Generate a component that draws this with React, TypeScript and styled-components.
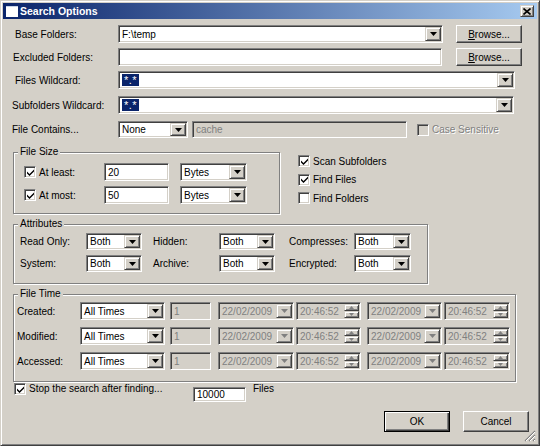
import React from 'react'
import styled, { createGlobalStyle, css } from 'styled-components'

const face = '#d4d0c8'
const shadow = '#808080'
const dark = '#404040'

const GlobalStyle = createGlobalStyle`
  html, body { margin: 0; padding: 0; background: ${face}; }
  body {
    font-family: "Liberation Sans", Arial, sans-serif;
    font-size: 10px;
    color: #000;
  }
  * { box-sizing: border-box; }
`

// classic 3D edges
const sunken = css`
  border: 1px solid;
  border-color: ${shadow} #fff #fff ${shadow};
  box-shadow: inset 1px 1px 0 ${dark}, inset -1px -1px 0 ${face};
`

const raised = css`
  border: 1px solid;
  border-color: ${face} ${dark} ${dark} ${face};
  box-shadow: inset 1px 1px 0 #fff, inset -1px -1px 0 ${shadow};
  background: ${face};
`

const Window = styled.div`
  position: relative;
  width: 540px;
  height: 446px;
  background: ${face};
  border: 1px solid;
  border-color: ${face} ${dark} ${dark} ${face};
  box-shadow: inset 1px 1px 0 #fff, inset -1px -1px 0 ${shadow};
  padding: 2px;
  display: flex;
  flex-direction: column;
`

const TitleBar = styled.div`
  height: 16px;
  display: flex;
  align-items: center;
  padding: 0 3px 0 3px;
  background: linear-gradient(to right, #0a246a, #a6caf0);
  color: #fff;
  font-weight: bold;
  font-size: 10.5px;
`

const TitleText = styled.span`
  flex: 1;
  margin-left: 2px;
`

const CloseButton = styled.span`
  ${raised};
  width: 14px;
  height: 12px;
  display: flex;
  align-items: center;
  justify-content: center;
`

const Row = styled.div<{ $mt: number; $pl?: number }>`
  display: flex;
  align-items: center;
  margin-top: ${p => p.$mt}px;
  padding-left: ${p => p.$pl ?? 9}px;
`

const Label = styled.span<{ $w: number; $indent?: number; $off?: boolean }>`
  width: ${p => p.$w}px;
  padding-left: ${p => p.$indent ?? 0}px;
  flex-shrink: 0;
  white-space: nowrap;
  color: ${p => (p.$off ? shadow : '#000')};
  text-shadow: ${p => (p.$off ? '1px 1px 0 #fff' : 'none')};
`

type FieldProps = { $w: number; $h?: number; $off?: boolean; $ml?: number; $mt?: number }

const Field = styled.div<FieldProps>`
  ${sunken};
  width: ${p => p.$w}px;
  height: ${p => p.$h ?? 18}px;
  margin-left: ${p => p.$ml ?? 0}px;
  margin-top: ${p => p.$mt ?? 0}px;
  padding: 1px;
  display: flex;
  align-items: stretch;
  flex-shrink: 0;
  background: ${p => (p.$off ? face : '#fff')};
  color: ${p => (p.$off ? shadow : '#000')};
`

const FieldText = styled.span`
  flex: 1;
  display: flex;
  align-items: center;
  padding-left: 2px;
  overflow: hidden;
  white-space: nowrap;
`

const Selected = styled.span`
  background: #0a246a;
  color: #fff;
  padding: 0 2px;
  font-size: 11px;
  line-height: 12px;
  letter-spacing: 0.5px;
`

const DropButton = styled.span`
  ${raised};
  width: 16px;
  display: flex;
  align-items: center;
  justify-content: center;
`

const Spin = styled.span`
  width: 15px;
  display: flex;
  flex-direction: column;
`

const SpinPart = styled.span`
  ${raised};
  flex: 1;
  display: flex;
  align-items: center;
  justify-content: center;
`

const Button = styled.button<{ $default?: boolean; $ml?: number; $h?: number }>`
  width: 66px;
  height: ${p => p.$h ?? 21}px;
  margin: 0 0 0 ${p => p.$ml ?? 0}px;
  padding: 0;
  font: inherit;
  color: #000;
  background: ${face};
  flex-shrink: 0;
  ${p =>
    p.$default
      ? css`
          border: 1px solid #000;
          box-shadow: inset 1px 1px 0 #fff, inset -1px -1px 0 ${dark}, inset -2px -2px 0 ${shadow};
        `
      : css`
          border: 1px solid;
          border-color: #fff ${dark} ${dark} #fff;
          box-shadow: inset -1px -1px 0 ${shadow};
        `}
`

const Box = styled.span<{ $off?: boolean }>`
  ${sunken};
  width: 12px;
  height: 12px;
  flex-shrink: 0;
  display: flex;
  align-items: center;
  justify-content: center;
  background: ${p => (p.$off ? face : '#fff')};
`

const CheckText = styled.span<{ $off?: boolean; $w?: number; $ml?: number }>`
  margin-left: ${p => p.$ml ?? 3}px;
  white-space: nowrap;
  ${p => (p.$w ? `width: ${p.$w}px;` : '')}
  color: ${p => (p.$off ? shadow : '#000')};
  text-shadow: ${p => (p.$off ? '1px 1px 0 #fff' : 'none')};
`

const Group = styled.div<{ $w: number; $h: number; $mt?: number }>`
  width: ${p => p.$w}px;
  height: ${p => p.$h}px;
  margin-top: ${p => p.$mt ?? 0}px;
  flex-shrink: 0;
  border: 1px solid ${shadow};
  box-shadow: inset 1px 1px 0 #fff, 1px 1px 0 #fff;
  display: flex;
  flex-direction: column;
`

const Caption = styled.span`
  align-self: flex-start;
  margin: -7px 0 0 4px;
  padding: 0 2px;
  line-height: 12px;
  background: ${face};
`

const GroupBody = styled.div<{ $mt: number; $pl: number; $gap: number }>`
  display: flex;
  flex-direction: column;
  gap: ${p => p.$gap}px;
  margin-top: ${p => p.$mt}px;
  padding-left: ${p => p.$pl}px;
`

const Line = styled.div`
  display: flex;
  align-items: center;
`

const MidRow = styled.div`
  display: flex;
  align-items: flex-start;
  margin-top: 14px;
  padding-left: 10px;
`

const CheckList = styled.div`
  display: flex;
  flex-direction: column;
  margin-left: 18px;
`

const CheckItem = styled.div`
  height: 18.5px;
  display: flex;
  align-items: center;
`

const Block = styled.div`
  padding-left: 10px;
`

const AttrGrid = styled.div`
  display: grid;
  grid-template-columns: 66px 67px 66px 70px 65px 57px;
  row-gap: 5px;
  align-items: center;
  margin-top: 3px;
  padding-left: 6px;
`

const StopRow = styled.div`
  display: flex;
  align-items: flex-start;
  margin-top: 1px;
  padding-left: 11px;
`

const ButtonRow = styled.div`
  display: flex;
  justify-content: flex-end;
  margin-top: 9px;
  padding-right: 8px;
`

const Grip = styled.svg`
  position: absolute;
  right: 3px;
  bottom: 3px;
`

const Arrow = ({ color = '#000' }: { color?: string }) => (
  <svg width="7" height="4" viewBox="0 0 7 4">
    <path d="M0 0h7L3.5 4z" fill={color} />
  </svg>
)

const SmallArrow = ({ up, color }: { up?: boolean; color: string }) => (
  <svg width="5" height="3" viewBox="0 0 5 3">
    <path d={up ? 'M2.5 0L5 3H0z' : 'M0 0h5L2.5 3z'} fill={color} />
  </svg>
)

const Tick = ({ color = '#000' }: { color?: string }) => (
  <svg width="7" height="7" viewBox="0 0 7 7">
    <path d="M0 2.5L2.5 5L7 0.5V2.5L2.5 7L0 4.5z" fill={color} />
  </svg>
)

type ComboProps = { w: number; h?: number; ml?: number; off?: boolean; children?: React.ReactNode }

const Combo = ({ w, h, ml, off, children }: ComboProps) => (
  <Field $w={w} $h={h} $ml={ml} $off={off}>
    <FieldText>{children}</FieldText>
    <DropButton>
      <Arrow color={off ? shadow : '#000'} />
    </DropButton>
  </Field>
)

const TimeBox = ({ w, ml }: { w: number; ml: number }) => (
  <Field $w={w} $ml={ml} $off>
    <FieldText>20:46:52</FieldText>
    <Spin>
      <SpinPart>
        <SmallArrow up color={shadow} />
      </SpinPart>
      <SpinPart>
        <SmallArrow color={shadow} />
      </SpinPart>
    </Spin>
  </Field>
)

const Check = ({ checked, off }: { checked?: boolean; off?: boolean }) => (
  <Box $off={off}>{checked && <Tick />}</Box>
)

const Browse = ({ ml }: { ml: number }) => (
  <Button $ml={ml} $h={18}>
    <u>B</u>rowse...
  </Button>
)

const timeRows = ['Created:', 'Modified:', 'Accessed:']
const attrRows = [
  ['Read Only:', 'Hidden:', 'Compresses:'],
  ['System:', 'Archive:', 'Encrypted:'],
]

export default function App() {
  return (
    <>
      <GlobalStyle />
      <Window>
        <TitleBar>
          <svg width="12" height="11" viewBox="0 0 12 11">
            <rect x="0" y="0" width="12" height="11" fill="#fff" />
            <rect x="0" y="0" width="12" height="1" fill="#c8d4e8" />
          </svg>
          <TitleText>Search Options</TitleText>
          <CloseButton>
            <svg width="8" height="7" viewBox="0 0 8 7">
              <path d="M0.5 0.5L7.5 6.5M7.5 0.5L0.5 6.5" stroke="#000" strokeWidth="1.6" />
            </svg>
          </CloseButton>
        </TitleBar>

        <Row $mt={6}>
          <Label $w={106} $indent={3}>Base Folders:</Label>
          <Combo w={325}>F:\temp</Combo>
          <Browse ml={13} />
        </Row>
        <Row $mt={5}>
          <Label $w={106} $indent={1}>Excluded Folders:</Label>
          <Field $w={324} />
          <Browse ml={14} />
        </Row>
        <Row $mt={5}>
          <Label $w={106} $indent={3}>Files Wildcard:</Label>
          <Combo w={397}>
            <Selected>*.*</Selected>
          </Combo>
        </Row>
        <Row $mt={7}>
          <Label $w={106}>Subfolders Wildcard:</Label>
          <Combo w={396}>
            <Selected>*.*</Selected>
          </Combo>
        </Row>
        <Row $mt={7}>
          <Label $w={106}>File Contains...</Label>
          <Combo w={70} h={17}>None</Combo>
          <Field $w={215} $h={17} $ml={4} $off>
            <FieldText>cache</FieldText>
          </Field>
          <Row $mt={0} $pl={10}>
            <Check off />
            <CheckText $off>Case Sensitive</CheckText>
          </Row>
        </Row>

        <MidRow>
          <Group $w={267} $h={62}>
            <Caption>File Size</Caption>
            <GroupBody $mt={5} $pl={10} $gap={5}>
              {[
                ['At least:', '20'],
                ['At most:', '50'],
              ].map(([label, value]) => (
                <Line key={label}>
                  <Check checked />
                  <CheckText $w={65}>{label}</CheckText>
                  <Field $w={65}>
                    <FieldText>{value}</FieldText>
                  </Field>
                  <Combo w={67} ml={11}>
                    Bytes
                  </Combo>
                </Line>
              ))}
            </GroupBody>
          </Group>
          <CheckList>
            <CheckItem>
              <Check checked />
              <CheckText>Scan Subfolders</CheckText>
            </CheckItem>
            <CheckItem>
              <Check checked />
              <CheckText>Find Files</CheckText>
            </CheckItem>
            <CheckItem>
              <Check />
              <CheckText>Find Folders</CheckText>
            </CheckItem>
          </CheckList>
        </MidRow>

        <Block>
          <Group $w={415} $h={60} $mt={10}>
            <Caption>Attributes</Caption>
            <AttrGrid>
              {attrRows.map(row =>
                row.map((label, i) => (
                  <React.Fragment key={label}>
                    <Label $w={66}>{label}</Label>
                    <Combo w={i === 2 ? 57 : 56} h={17}>
                      Both
                    </Combo>
                  </React.Fragment>
                ))
              )}
            </AttrGrid>
          </Group>

          <Group $w={503} $h={88} $mt={10}>
            <Caption>File Time</Caption>
            <GroupBody $mt={2} $pl={3} $gap={7}>
              {timeRows.map(label => (
                <Line key={label}>
                  <Label $w={63}>{label}</Label>
                  <Combo w={85}>All Times</Combo>
                  <Field $w={41} $ml={5} $off>
                    <FieldText>1</FieldText>
                  </Field>
                  <Combo w={76} ml={7} off>
                    22/02/2009
                  </Combo>
                  <TimeBox w={65} ml={2} />
                  <Combo w={75} ml={6} off>
                    22/02/2009
                  </Combo>
                  <TimeBox w={66} ml={2} />
                </Line>
              ))}
            </GroupBody>
          </Group>
        </Block>

        <StopRow>
          <Check checked />
          <CheckText $w={164}>Stop the search after finding...</CheckText>
          <Field $w={53} $h={15} $mt={4}>
            <FieldText>10000</FieldText>
          </Field>
          <CheckText $ml={7}>Files</CheckText>
        </StopRow>

        <ButtonRow>
          <Button $default>OK</Button>
          <Button $ml={13}>Cancel</Button>
        </ButtonRow>

        <Grip width="12" height="12" viewBox="0 0 12 12">
          <path d="M11 1L1 11M11 5L5 11M11 9L9 11" stroke={shadow} strokeWidth="1.2" />
          <path d="M11 2L2 11M11 6L6 11M11 10L10 11" stroke="#fff" strokeWidth="1" />
        </Grip>
      </Window>
    </>
  )
}
